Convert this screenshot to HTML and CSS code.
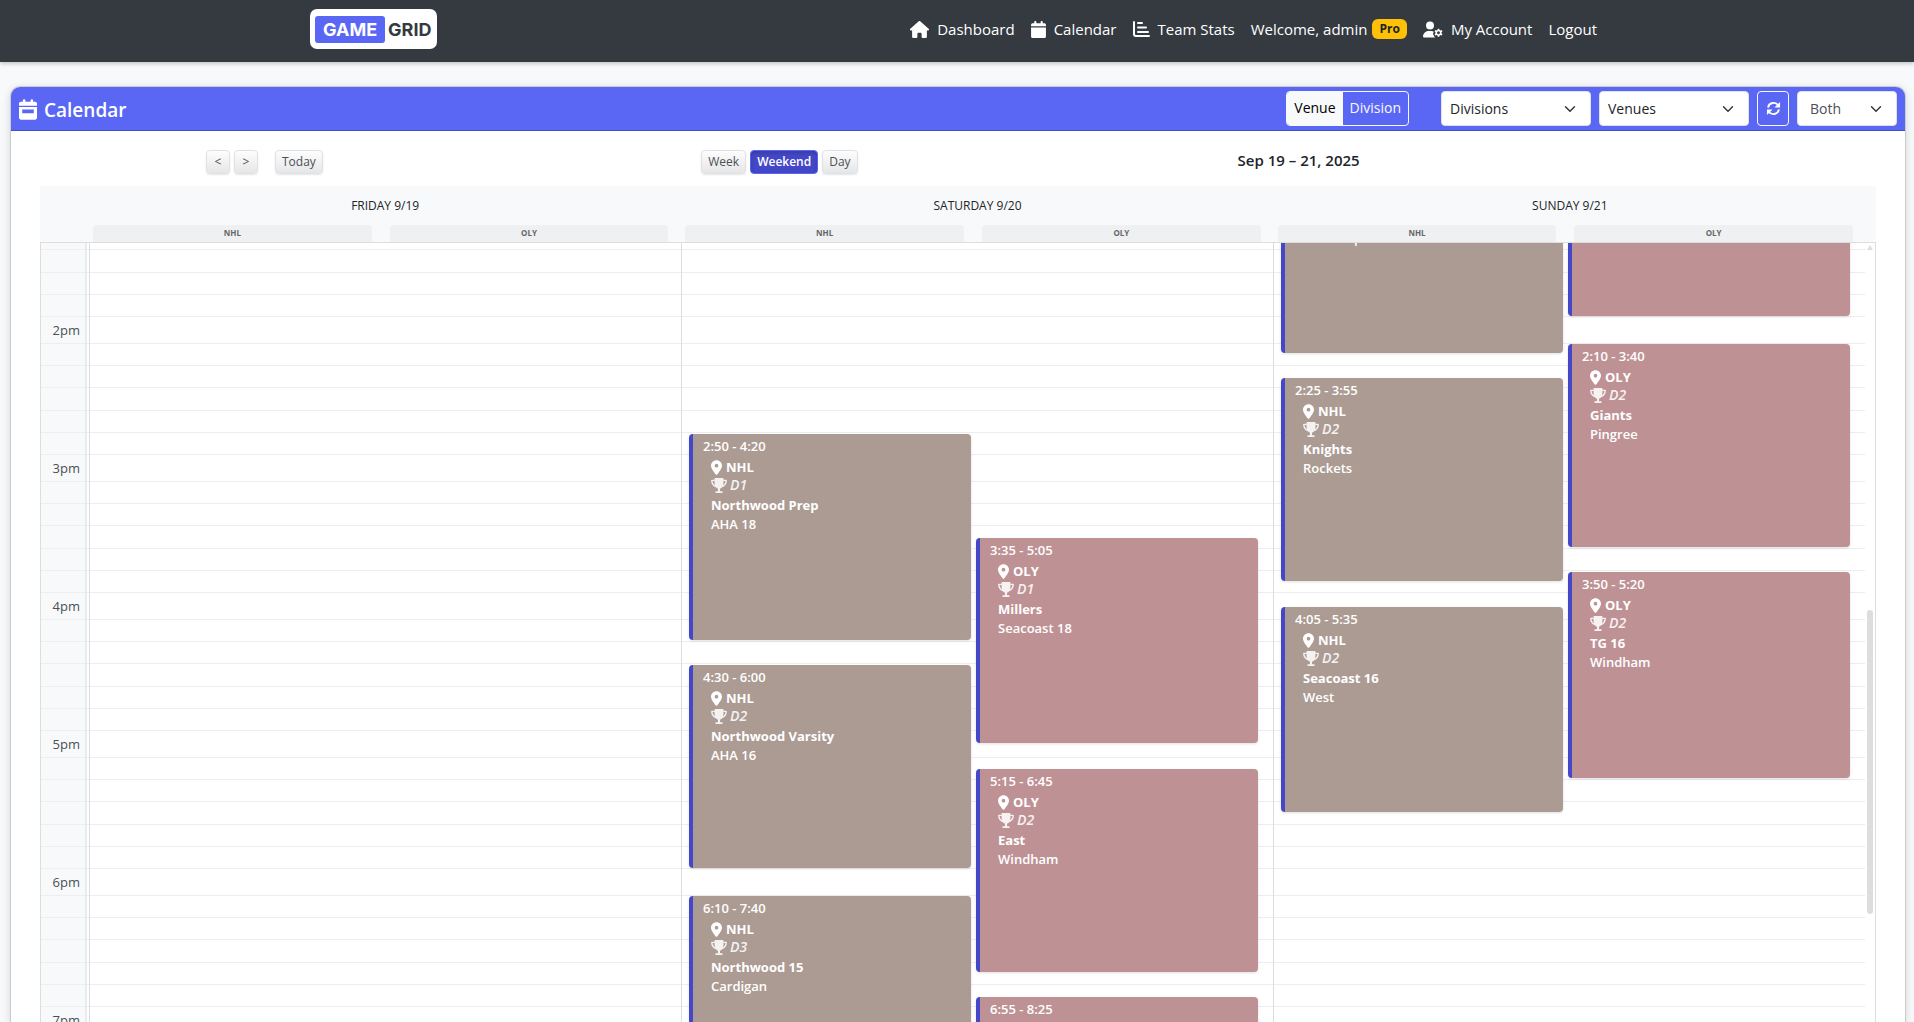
FILE: index.html
```html
<!DOCTYPE html>
<html lang="en">
<head>
<meta charset="utf-8">
<meta name="viewport" content="width=device-width, initial-scale=1">
<title>Calendar - Game Grid</title>
<link rel="stylesheet" href="styles.css">
</head>
<body>
<svg class="sprite" aria-hidden="true">
  <symbol id="pin" viewBox="0 0 384 512"><path d="M215.7 499.2C267 435 384 279.4 384 192C384 86 298 0 192 0S0 86 0 192c0 87.4 117 243 168.3 307.2c12.3 15.3 35.1 15.3 47.4 0zM192 128a64 64 0 1 1 0 128 64 64 0 1 1 0-128z"/></symbol>
  <symbol id="trophy" viewBox="0 0 17 16"><path d="M4.500 0H12.500Q13.300 0 13.300 1V4.500C13.300 8.500 11.600 10.600 9.600 11.500V14H11.500Q12.500 14 12.500 15T11.500 16H5.500Q4.500 16 4.500 15T5.500 14H7.400V11.500C5.400 10.600 3.700 8.500 3.700 4.500V1Q3.700 0 4.500 0z"/><path fill="none" stroke="currentColor" stroke-width="1.500" stroke-linejoin="round" d="M4 2.500H.8C.8 6 2.800 8.500 6 9.500M13 2.500H16.200C16.200 6 14.200 8.500 11 9.500"/></symbol>
</svg>

<header class="navbar">
  <div class="navbar-inner">
    <a class="logo" href="#"><span class="logo-game">GAME</span><span class="logo-grid">GRID</span></a>
    <nav class="nav">
      <a href="#"><svg class="i-home" viewBox="0 0 576 512"><path d="M575.8 255.500c0 18-15 32.100-32 32.100h-32l.7 160.200c0 2.700-.2 5.400-.5 8.100V472c0 22.100-17.900 40-40 40H392c-22.100 0-40-17.900-40-40V384c0-17.700-14.300-32-32-32H256c-17.700 0-32 14.300-32 32v88c0 22.100-17.900 40-40 40H104c-22.100 0-40-17.900-40-40V287.600H32c-18 0-32-14-32-32.100c0-9 3-17 10-24L266.400 8c7-7 15-8 22-8s15 2 21 7L564.800 231.500c8 7 12 15 11 24z"/></svg>Dashboard</a>
      <a href="#"><svg class="i-cal" viewBox="0 0 448 512"><path d="M96 32V64H48C21.500 64 0 85.500 0 112v48H448V112c0-26.500-21.500-48-48-48H352V32c0-17.700-14.300-32-32-32s-32 14.300-32 32V64H160V32c0-17.700-14.300-32-32-32S96 14.300 96 32zM448 192H0V464c0 26.500 21.500 48 48 48H400c26.500 0 48-21.500 48-48V192z"/></svg>Calendar</a>
      <a href="#"><svg class="i-stats" viewBox="0 0 17 16" fill="none" stroke="currentColor" stroke-width="2" stroke-linecap="round"><path d="M1 1V13Q1 15 3 15H16M5 2H9M5 6.500H13M5 11H15"/></svg>Team Stats</a>
      <span class="welcome">Welcome, admin<span class="badge">Pro</span></span>
      <a href="#"><svg class="i-user" viewBox="0 0 640 512"><path d="M224 256A128 128 0 1 0 224 0a128 128 0 1 0 0 256zm-45.700 48C79.800 304 0 383.800 0 482.300C0 498.700 13.300 512 29.700 512H392c-28-17-42-42-46-70l-20-22c-10-33 5-66 22-96-30-16-50-20-77.700-20z"/><path fill-rule="evenodd" d="M472 228h48l10 42 25 14 42-13 26 43-31 30v30l31 30-26 43-42-13-25 14-10 42h-48l-10-42-25-14-42 13-26-43 31-30v-30l-31-30 26-43 42 13 25-14zM496 314a45 45 0 1 0 .1 0z"/></svg>My Account</a>
      <a href="#">Logout</a>
    </nav>
  </div>
</header>

<main class="card">
  <div class="card-header">
    <h1 class="card-title"><svg class="i-title" viewBox="0 0 448 512"><path fill-rule="evenodd" d="M96 32V64H48C21.500 64 0 85.500 0 112v48H448V112c0-26.500-21.500-48-48-48H352V32c0-17.700-14.300-32-32-32s-32 14.300-32 32V64H160V32c0-17.700-14.300-32-32-32S96 14.300 96 32zM448 192H0V464c0 26.500 21.500 48 48 48H400c26.500 0 48-21.500 48-48V192zM80 256H368V352H80z"/></svg>Calendar</h1>
    <div class="toggle">
      <button type="button" class="toggle-btn is-on">Venue</button>
      <button type="button" class="toggle-btn">Division</button>
    </div>
    <div class="filters">
      <select class="select wide" aria-label="Divisions"><option>Divisions</option></select>
      <select class="select wide" aria-label="Venues"><option>Venues</option></select>
      <button type="button" class="refresh" aria-label="Refresh"><svg viewBox="0 0 16 16" fill="none" stroke="currentColor" stroke-width="2"><path d="M2.200 7A6 6 0 0 1 13 4.500M13.800 9A6 6 0 0 1 3 11.500"/><path fill="currentColor" stroke="none" d="M15 1v6H9zM1 15V9h6z"/></svg></button>
      <select class="select narrow" aria-label="Home or away"><option>Both</option></select>
    </div>
  </div>

  <div class="toolbar">
    <div class="group">
      <button type="button" class="btn step">&lt;</button>
      <button type="button" class="btn step">&gt;</button>
      <button type="button" class="btn today">Today</button>
    </div>
    <div class="group">
      <button type="button" class="btn">Week</button>
      <button type="button" class="btn is-active">Weekend</button>
      <button type="button" class="btn">Day</button>
    </div>
    <h2 class="range">Sep 19 – 21, 2025</h2>
  </div>

  <section class="calendar">
    <div class="days-head">
      <div class="day-head"><h3>FRIDAY 9/19</h3><div class="venues"><span>NHL</span><span>OLY</span></div></div>
      <div class="day-head"><h3>SATURDAY 9/20</h3><div class="venues"><span>NHL</span><span>OLY</span></div></div>
      <div class="day-head"><h3>SUNDAY 9/21</h3><div class="venues"><span>NHL</span><span>OLY</span></div></div>
    </div>
    <div class="viewport">
      <div class="timegrid">
        <div class="axis">
          <div class="hour"></div><div class="hour"></div><div class="hour">2pm</div><div class="hour">3pm</div><div class="hour">4pm</div><div class="hour">5pm</div><div class="hour">6pm</div><div class="hour">7pm</div>
        </div>
        <div class="days">
          <div class="day"></div>
          <div class="day">
            <div class="lane nhl">
              <article class="event" style="top:393px;height:206px"><time>2:50 - 4:20</time><div class="venue"><svg><use href="#pin"/></svg>NHL</div><div class="division"><svg><use href="#trophy"/></svg><i>D1</i></div><div class="home">Northwood Prep</div><div class="away">AHA 18</div></article>
              <article class="event" style="top:624px;height:203px"><time>4:30 - 6:00</time><div class="venue"><svg><use href="#pin"/></svg>NHL</div><div class="division"><svg><use href="#trophy"/></svg><i>D2</i></div><div class="home">Northwood Varsity</div><div class="away">AHA 16</div></article>
              <article class="event" style="top:855px;height:205px"><time>6:10 - 7:40</time><div class="venue"><svg><use href="#pin"/></svg>NHL</div><div class="division"><svg><use href="#trophy"/></svg><i>D3</i></div><div class="home">Northwood 15</div><div class="away">Cardigan</div></article>
            </div>
            <div class="lane oly">
              <article class="event" style="top:497px;height:205px"><time>3:35 - 5:05</time><div class="venue"><svg><use href="#pin"/></svg>OLY</div><div class="division"><svg><use href="#trophy"/></svg><i>D1</i></div><div class="home">Millers</div><div class="away">Seacoast 18</div></article>
              <article class="event" style="top:728px;height:203px"><time>5:15 - 6:45</time><div class="venue"><svg><use href="#pin"/></svg>OLY</div><div class="division"><svg><use href="#trophy"/></svg><i>D2</i></div><div class="home">East</div><div class="away">Windham</div></article>
              <article class="event" style="top:956px;height:205px"><time>6:55 - 8:25</time></article>
            </div>
          </div>
          <div class="day">
            <div class="lane nhl">
              <article class="event scrolled" style="top:107px;height:205px"><div class="away">Winthrop</div></article>
              <article class="event" style="top:337px;height:203px"><time>2:25 - 3:55</time><div class="venue"><svg><use href="#pin"/></svg>NHL</div><div class="division"><svg><use href="#trophy"/></svg><i>D2</i></div><div class="home">Knights</div><div class="away">Rockets</div></article>
              <article class="event" style="top:566px;height:205px"><time>4:05 - 5:35</time><div class="venue"><svg><use href="#pin"/></svg>NHL</div><div class="division"><svg><use href="#trophy"/></svg><i>D2</i></div><div class="home">Seacoast 16</div><div class="away">West</div></article>
            </div>
            <div class="lane oly">
              <article class="event" style="top:70px;height:205px"></article>
              <article class="event" style="top:303px;height:203px"><time>2:10 - 3:40</time><div class="venue"><svg><use href="#pin"/></svg>OLY</div><div class="division"><svg><use href="#trophy"/></svg><i>D2</i></div><div class="home">Giants</div><div class="away">Pingree</div></article>
              <article class="event" style="top:531px;height:206px"><time>3:50 - 5:20</time><div class="venue"><svg><use href="#pin"/></svg>OLY</div><div class="division"><svg><use href="#trophy"/></svg><i>D2</i></div><div class="home">TG 16</div><div class="away">Windham</div></article>
            </div>
          </div>
        </div>
      </div>
      <div class="scrollbar"><span class="arrow"></span><span class="thumb"></span></div>
    </div>
  </section>
</main>
</body>
</html>
```
FILE: styles.css
```css
* { box-sizing: border-box; }

body {
  margin: 0;
  height: 100vh;
  overflow: hidden;
  display: flex;
  flex-direction: column;
  background: #f8f9fa;
  color: #212529;
  font-family: "Open Sans", "Noto Sans", sans-serif;
  font-size: 14px;
}

h1, h2, h3 { margin: 0; }
button, select { font: inherit; }
svg { fill: currentColor; flex: none; }
.sprite { display: none; }

/* Top bar */
.navbar {
  flex: none;
  height: 62px;
  background: #343a40;
  box-shadow: 0 2px 4px rgba(0, 0, 0, .2);
}
.navbar-inner {
  max-width: 1294px;
  height: 58px;
  margin: 0 auto;
  display: flex;
  align-items: center;
  justify-content: space-between;
}
.logo {
  display: flex;
  align-items: center;
  height: 40px;
  padding: 0 6px 0 5px;
  gap: 3px;
  border-radius: 7px;
  background: #fff;
  font-family: Inter, sans-serif;
  font-weight: 700;
  font-size: 18px;
  line-height: 27px;
  text-decoration: none;
}
.logo-game { padding: 0 8px; border-radius: 3px; background: #5a67f5; color: #fff; }
.logo-grid { color: #343a40; }

.nav { display: flex; align-items: center; gap: 16px; padding-right: 7px; font-size: 15px; line-height: 24px; color: #fff; }
.nav a { display: flex; align-items: center; gap: 8px; color: #fff; text-decoration: none; }
.i-home { width: 19px; height: 17px; }
.i-cal { width: 15px; height: 17px; }
.i-stats { width: 17px; height: 16px; fill: none; }
.i-user { width: 20px; height: 17px; }
.welcome { display: flex; align-items: center; gap: 5px; }
.badge {
  padding: 0 7px;
  border-radius: 6px;
  background: #ffc107;
  color: #212529;
  font-size: 12px;
  font-weight: 700;
  line-height: 20px;
}

/* Card */
.card {
  flex: 1;
  min-height: 0;
  margin: 24px 8px 0 10px;
  display: flex;
  flex-direction: column;
  overflow: hidden;
  border: 1px solid #ccc;
  border-bottom: 0;
  border-radius: 10px 10px 0 0;
  background: #fff;
  box-shadow: 0 2px 8px rgba(0, 0, 0, .14);
}
.card-header {
  flex: none;
  height: 44px;
  display: flex;
  align-items: center;
  padding: 0 8px;
  background: #5a67f5;
  border-bottom: 1px solid #4650c8;
  color: #fff;
}
.card-title { display: flex; align-items: center; gap: 7px; margin-right: auto; padding-top: 2px; font-size: 19px; font-weight: 600; line-height: 30px; }
.i-title { width: 18px; height: 21px; }

.toggle { display: flex; height: 35px; margin-right: 32px; border: 1px solid #f8f9fa; border-radius: 4px; overflow: hidden; }
.toggle-btn { padding: 0 7px 3px; border: 0; background: transparent; color: #f8f9fa; }
.toggle-btn.is-on { background: #f8f9fa; color: #000; }

.filters { display: flex; gap: 8px; }
.select {
  appearance: none;
  height: 35px;
  padding: 0 8px;
  border: 1px solid #dee2e6;
  border-radius: 4px;
  color: #212529;
  background: #fff url("data:image/svg+xml,%3Csvg xmlns='http://www.w3.org/2000/svg' viewBox='0 0 16 16'%3E%3Cpath fill='none' stroke='%23343a40' stroke-linecap='round' stroke-linejoin='round' stroke-width='2' d='m2 5 6 6 6-6'/%3E%3C/svg%3E") no-repeat right 14px center / 12px 12px;
}
.wide { width: 150px; }
.narrow { width: 100px; padding-left: 12px; font-weight: 500; color: #495057; }
.refresh {
  width: 32px;
  height: 35px;
  padding: 0;
  display: grid;
  place-items: center;
  border: 1px solid #f8f9fa;
  border-radius: 4px;
  background: transparent;
  color: #fff;
}
.refresh svg { width: 15px; height: 15px; fill: none; }

/* View controls */
.toolbar {
  flex: none;
  height: 55px;
  display: grid;
  grid-template-columns: 495fr 536fr 638fr;
  padding: 0 29px 0 195px;
  align-items: center;
}
.group { display: flex; gap: 4px; padding-top: 7px; }
.btn {
  height: 24px;
  padding: 0 6px;
  border: 1px solid #dee2e6;
  border-radius: 4px;
  background: linear-gradient(#fdfdfd, #e6e6e6);
  box-shadow: 0 1px 2px rgba(0, 0, 0, .1);
  color: #495057;
  font-size: 12px;
  font-weight: 500;
  line-height: 22px;
}
.step { width: 24px; padding: 0; }
.today { margin-left: 13px; }
.btn.is-active {
  border-color: #5a67f5;
  background: #4448c8;
  box-shadow: inset 0 2px 4px rgba(0, 0, 0, .2);
  color: #fff;
  font-weight: 600;
}
.range { padding-top: 3px; font-size: 15px; font-weight: 600; line-height: 24px; }

/* Calendar */
.calendar { flex: 1; min-height: 0; display: flex; flex-direction: column; margin: 0 29px; }
.days-head {
  flex: none;
  height: 56px;
  display: grid;
  grid-template-columns: repeat(3, 1fr);
  padding: 0 10px 0 49px;
  background: #f8f9fa;
}
.day-head { display: flex; flex-direction: column; justify-content: space-between; }
.day-head h3 { padding-top: 10px; font-size: 12px; font-weight: 500; line-height: 20px; text-align: center; }
.venues { display: grid; grid-template-columns: 1fr 1fr; gap: 18px; padding: 0 13px 0 4px; }
.venues span {
  padding-bottom: 1px;
  border-radius: 4px 4px 0 0;
  background: #eff0f2;
  color: #666;
  font-size: 8px;
  font-weight: 700;
  line-height: 16px;
  text-align: center;
}

.viewport { flex: 1; min-height: 0; display: flex; overflow: hidden; border: 1px solid #ddd; border-bottom: 0; }
.timegrid { flex: 1; display: flex; align-items: flex-start; margin-top: -202px; }
.axis, .days {
  background-image: linear-gradient(
    transparent 26px, #eee 26px, #eee 27px, transparent 27px,
    transparent 48px, #eee 48px, #eee 49px, transparent 49px,
    transparent 70px, #eee 70px, #eee 71px, transparent 71px,
    transparent 93px, #eee 93px, #eee 94px, transparent 94px,
    transparent 115px, #eee 115px, #eee 116px, transparent 116px,
    transparent 137px, #eee 137px);
  background-size: 100% 138px;
}
.axis { width: 46px; border-right: 2px solid #e9ecef; background-color: #f8f9fa; }
.hour {
  height: 138px;
  padding: 3px 5px 0 0;
  color: #495057;
  font-size: 13px;
  font-weight: 500;
  line-height: 20px;
  text-align: right;
}
.days { flex: 1; height: 1104px; display: grid; grid-template-columns: repeat(3, 1fr); padding-left: 2px; }
.day { display: grid; grid-template-columns: 1fr 1fr; gap: 5px; padding: 0 15px 0 7px; border-left: 1px solid #ddd; }
.lane { position: relative; }
.event {
  position: absolute;
  left: 0;
  right: 0;
  padding: 3px 10px;
  border-left: 4px solid #4448c8;
  border-radius: 4px;
  box-shadow: 0 1px 3px rgba(0, 0, 0, .12);
  color: #fff;
  font-size: 13px;
  font-weight: 600;
  overflow: hidden;
}
.event.scrolled { padding-top: 81px; }
.nhl .event { background: #ac9b93; }
.oly .event { background: #be9294; }
.event time { display: block; margin-bottom: 3px; line-height: 18px; }
.venue, .division { display: flex; align-items: center; padding-left: 8px; line-height: 18px; }
.venue { gap: 4px; font-weight: 700; }
.venue svg { width: 11px; height: 15px; }
.division { gap: 3px; margin-bottom: 2px; font-size: 14px; opacity: .88; }
.division svg { width: 16px; height: 15px; }
.home, .away { padding-left: 8px; line-height: 19px; }
.home { font-weight: 700; }

.scrollbar { flex: none; width: 10px; display: flex; flex-direction: column; align-items: center; padding-top: 2px; }
.arrow { border: 3px solid transparent; border-top-width: 0; border-bottom: 5px solid #ddd; }
.thumb { width: 6px; height: 304px; margin-top: 360px; border-radius: 3px; background: #ddd; }
```
